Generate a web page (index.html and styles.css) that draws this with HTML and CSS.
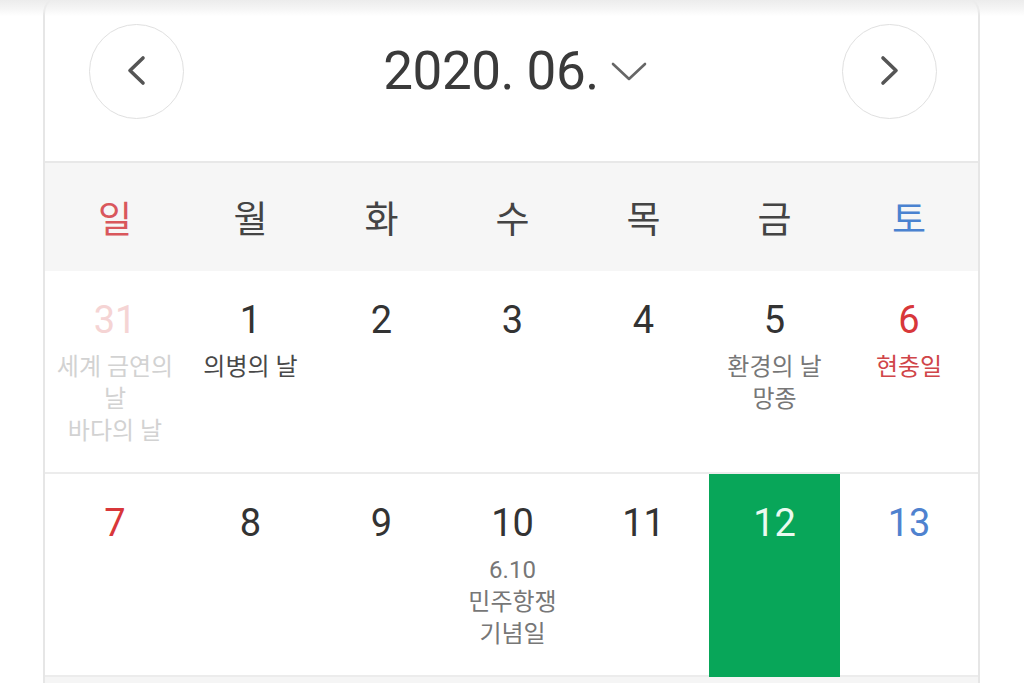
FILE: index.html
```html
<!DOCTYPE html>
<html lang="ko">
<head>
    <meta charset="UTF-8">
    <meta name="viewport" content="width=device-width, initial-scale=1.0">
    <title>달력</title>
    <link rel="stylesheet" href="styles.css">
</head>
<body>
    <div class="top-shade"></div>

    <div class="calendar">
        <!-- 월 이동 -->
        <div class="cal-head">
            <button class="nav-btn" aria-label="이전 달">
                <svg width="24" height="32" viewBox="0 0 24 32"><path d="M18 3 L5 15.5 L18 28" fill="none" stroke="#555" stroke-width="3.6" stroke-linecap="round" stroke-linejoin="round"/></svg>
            </button>
            <div class="month">
                <span class="month-text">2020. 06.</span>
                <svg width="36" height="20" viewBox="0 0 36 20"><path d="M2 2 L18 17 L34 2" fill="none" stroke="#666" stroke-width="2.6" stroke-linecap="round" stroke-linejoin="round"/></svg>
            </div>
            <button class="nav-btn" aria-label="다음 달">
                <svg width="24" height="32" viewBox="0 0 24 32"><path d="M6 3 L19 15.5 L6 28" fill="none" stroke="#555" stroke-width="3.6" stroke-linecap="round" stroke-linejoin="round"/></svg>
            </button>
        </div>

        <!-- 요일 -->
        <div class="week weekdays">
            <div class="sun">일</div>
            <div>월</div>
            <div>화</div>
            <div>수</div>
            <div>목</div>
            <div>금</div>
            <div class="sat">토</div>
        </div>

        <!-- 날짜 -->
        <div class="week days">
            <div class="day other">
                <div class="num">31</div>
                <div class="event">세계 금연의<br>날<br>바다의 날</div>
            </div>
            <div class="day">
                <div class="num">1</div>
                <div class="event dark">의병의 날</div>
            </div>
            <div class="day"><div class="num">2</div></div>
            <div class="day"><div class="num">3</div></div>
            <div class="day"><div class="num">4</div></div>
            <div class="day">
                <div class="num">5</div>
                <div class="event">환경의 날<br>망종</div>
            </div>
            <div class="day holiday">
                <div class="num">6</div>
                <div class="event">현충일</div>
            </div>
        </div>

        <div class="week days">
            <div class="day sun"><div class="num">7</div></div>
            <div class="day"><div class="num">8</div></div>
            <div class="day"><div class="num">9</div></div>
            <div class="day">
                <div class="num">10</div>
                <div class="event">6.10<br>민주항쟁<br>기념일</div>
            </div>
            <div class="day"><div class="num">11</div></div>
            <div class="day today"><div class="num">12</div></div>
            <div class="day sat"><div class="num">13</div></div>
        </div>

        <div class="week next-row">
            <div></div><div></div><div></div><div></div><div></div><div></div><div></div>
        </div>
    </div>
</body>
</html>
```

FILE: styles.css
```css
* {
    margin: 0;
    padding: 0;
    box-sizing: border-box;
}

body {
    font-family: Roboto, "Noto Sans CJK KR", sans-serif;
    background: #fff;
    color: #333;
    overflow: hidden;
    height: 683px;
}

.top-shade {
    position: absolute;
    top: 0;
    left: 0;
    right: 0;
    height: 16px;
    background: linear-gradient(#ececec, rgba(240, 240, 240, 0.6) 60%, rgba(255, 255, 255, 0));
    z-index: 2;
}

.calendar {
    margin: -6px 44px 0 43px;
    border: 2px solid #e6e6e6;
    border-bottom: none;
    border-radius: 20px 20px 0 0;
    overflow: hidden;
}

.cal-head {
    height: 167px;
    display: flex;
    align-items: center;
    justify-content: space-between;
    padding: 0 41px 15px 44px;
    border-bottom: 2px solid #e8e8e8;
}

.nav-btn {
    width: 95px;
    height: 95px;
    border-radius: 50%;
    border: 1.5px solid #e0e0e0;
    background: #fff;
    display: flex;
    align-items: center;
    justify-content: center;
}

.month {
    display: flex;
    align-items: center;
    gap: 12px;
    padding-left: 4px;
}

.month-text {
    font-size: 53px;
    color: #3a3a3a;
    letter-spacing: -0.5px;
}

.month svg {
    margin-top: 2px;
}

.week {
    display: grid;
    grid-template-columns: 140px repeat(5, 131px) 1fr;
}

.weekdays {
    height: 108px;
    background: #f6f6f6;
    align-items: center;
    text-align: center;
    font-size: 37px;
    color: #444;
}

.weekdays .sun {
    color: #d9575c;
}

.weekdays .sat {
    color: #4a82d0;
}

.days {
    height: 203px;
    border-bottom: 2px solid #ececec;
}

.day {
    text-align: center;
    padding-top: 26px;
}

.num {
    font-size: 38px;
    line-height: 46px;
    color: #333;
}

.event {
    margin-top: 8px;
    font-size: 24px;
    line-height: 32px;
    color: #777;
}

.event.dark {
    color: #484848;
}

.day.other .num {
    color: #f5d4d4;
}

.day.other .event {
    color: #d2d2d2;
}

.day.holiday .num,
.day.sun .num {
    color: #d8373a;
}

.day.holiday .event {
    color: #d04549;
}

.day.sat .num {
    color: #4f82cf;
}

.day.today {
    background: #08a659;
    margin-bottom: -2px;
}

.day.today .num {
    color: #eafaf0;
}

.next-row {
    height: 40px;
    background: #f5f5f5;
}
```
